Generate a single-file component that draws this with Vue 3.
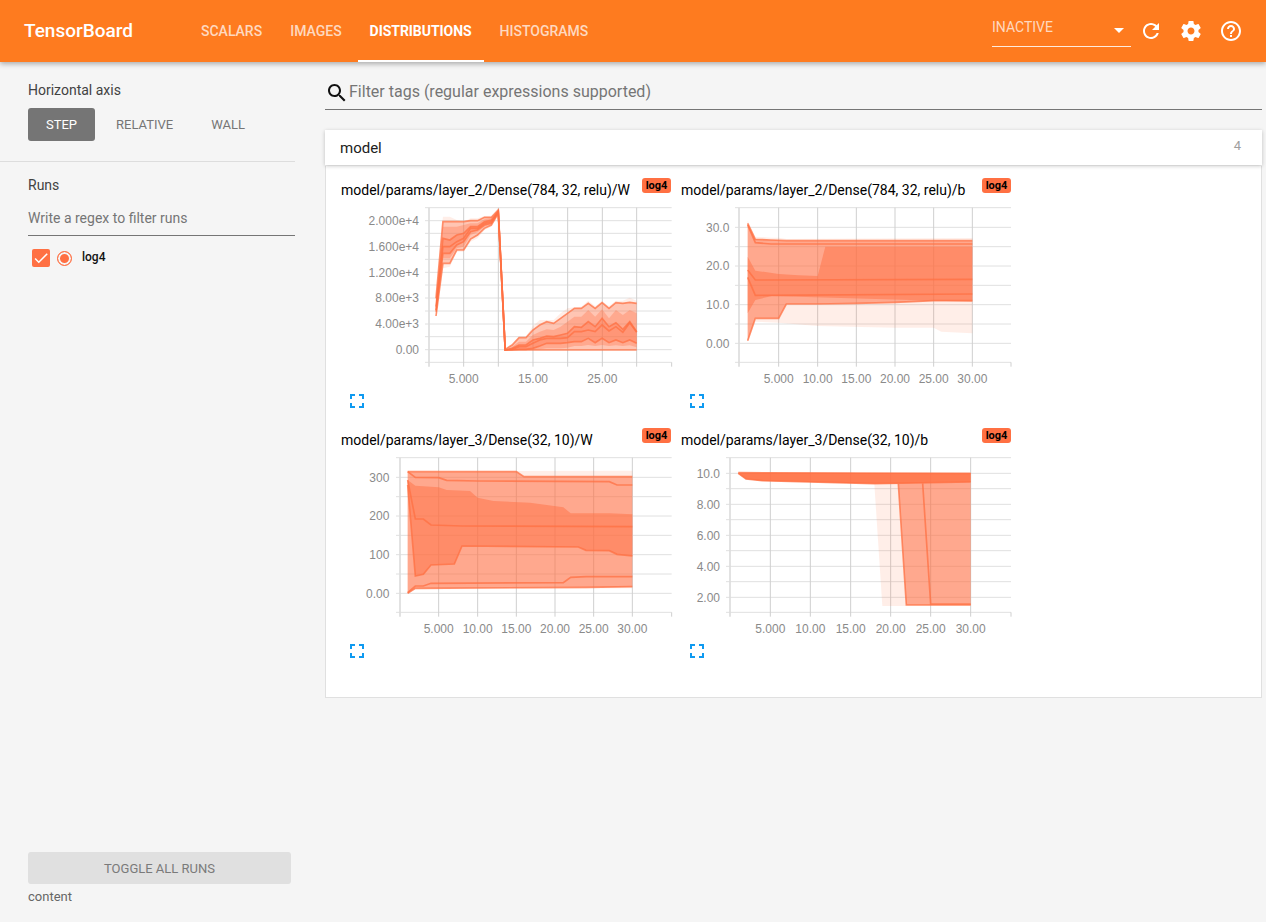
<script setup>
const tabs = ['Scalars', 'Images', 'Distributions', 'Histograms']

// 把一组 y 值按步长展开成点串（第一张图是逐步读出来的）
function steps(x0, dx, ys) {
  return ys.map((y, i) => `${x0 + dx * i},${y}`).join(' ')
}

// 上下两条折线合成一个闭合色带
function band(top, bottom) {
  return `${top} ${bottom.split(' ').reverse().join(' ')}`
}

const q = [
  [375, 140, 140, 150, 155, 145, 145, 138, 137, 115, 538, 525, 500, 500, 468, 450, 450, 450, 430, 415, 412, 410, 392, 408, 394, 408, 392, 392, 383, 392],
  [385, 155, 155, 155, 155, 152, 152, 142, 142, 120, 538, 525, 503, 503, 480, 465, 455, 460, 445, 430, 415, 415, 400, 415, 398, 415, 398, 400, 397, 400],
  [395, 170, 170, 170, 165, 160, 160, 148, 145, 122, 540, 530, 515, 515, 495, 485, 478, 480, 470, 455, 440, 440, 420, 440, 418, 445, 420, 435, 420, 430],
  [410, 205, 210, 195, 190, 170, 170, 155, 150, 124, 540, 535, 525, 525, 510, 505, 498, 500, 495, 490, 470, 472, 455, 470, 445, 470, 458, 478, 455, 485],
  [420, 230, 230, 215, 205, 175, 175, 160, 155, 125, 540, 538, 530, 530, 520, 510, 505, 505, 505, 503, 485, 485, 480, 485, 465, 483, 470, 487, 458, 487],
  [425, 250, 250, 225, 215, 185, 180, 165, 160, 127, 540, 540, 538, 538, 535, 528, 520, 520, 520, 518, 515, 515, 505, 518, 505, 518, 510, 518, 510, 520],
  [430, 265, 265, 235, 230, 195, 187, 170, 163, 128, 540, 540, 540, 540, 540, 538, 535, 535, 535, 533, 528, 528, 525, 528, 525, 528, 526, 528, 526, 532],
  [438, 280, 280, 240, 240, 207, 195, 175, 165, 130, 540, 540, 540, 540, 540, 540, 540, 540, 540, 540, 540, 540, 540, 540, 540, 540, 540, 540, 540, 540],
  [440, 295, 290, 245, 245, 215, 205, 180, 170, 132, 540, 540, 540, 540, 540, 540, 540, 540, 540, 540, 540, 540, 540, 540, 540, 540, 540, 540, 540, 540],
].map((ys) => steps(318, 20.76, ys))

const w1 = {
  q0: '233,155 559,153 907,152',
  q1: '233,155 559,155 582,170 907,170',
  q2: '233,155 256,172 326,173 350,181 443,183 838,185 861,195 907,195',
  q3: '233,180 256,197 326,202 350,210 420,213 443,233 490,243 600,248 700,262 722,280 838,280 907,283',
  q4: '233,180 256,297 280,297 303,315 396,318 907,320',
  q5: '233,195 256,468 280,463 303,435 373,432 396,378 745,381 768,391 838,392 861,403 907,408',
  q6: '233,518 256,498 280,498 303,490 700,488 722,472 768,470 907,470',
  q7: '233,520 256,505 768,502 907,500',
  q8: '233,520 256,508 907,505',
}

const b1 = {
  q0: '218,152 241,200 288,203 311,203 334,207 892,204',
  q1: '218,160 241,208 288,210 334,212 892,212',
  q2: '218,165 241,218 288,222 892,222',
  q3: '218,260 241,302 311,312 370,316 428,318 451,230 892,230',
  q4: '218,300 241,330 892,328',
  q5: '218,322 241,376 892,372',
  q6: '218,430 241,390 290,378 892,395',
  q7: '218,512 241,445 311,445 334,402 428,402 544,400 660,397 776,392 892,392',
  q8: '218,515 241,455 311,458 428,468 660,473 776,473 799,485 892,490',
}

const b2 = {
  top: '190,158 887,160',
  outer: '190,162 213,178 262,183 598,192 622,558 887,558',
  mid: '190,162 213,178 262,183 670,192 694,555 887,555',
  core: '190,160 213,177 262,182 598,191 887,186',
}

const charts = [
  {
    title: 'model/params/layer_2/Dense(784, 32, relu)/W',
    vbX: 33,
    left: 297,
    right: 1025,
    labelX: 267,
    xTicks: [
      { x: 401, label: '5.000' },
      { x: 505, label: '' },
      { x: 609, label: '15.00' },
      { x: 713, label: '' },
      { x: 817, label: '25.00' },
      { x: 920, label: '' },
    ],
    yTicks: [
      { y: 152, label: '2.000e+4' },
      { y: 229, label: '1.600e+4' },
      { y: 307, label: '1.200e+4' },
      { y: 384, label: '8.00e+3' },
      { y: 462, label: '4.00e+3' },
      { y: 539, label: '0.00' },
    ],
    minor: [113, 190, 268, 345, 423, 500, 577],
    bands: [
      { level: 'outer', points: band(q[0], q[8]) },
      { level: 'soft', points: band(q[1], q[7]) },
      { level: 'soft', points: band(q[2], q[6]) },
      { level: 'soft', points: band(q[3], q[5]) },
    ],
    lines: [q[1], q[3], q[4], q[5], q[7]],
  },
  {
    title: 'model/params/layer_2/Dense(784, 32, relu)/b',
    vbX: 18,
    left: 192,
    right: 1008,
    labelX: 163,
    xTicks: [
      { x: 311, label: '5.000' },
      { x: 428, label: '10.00' },
      { x: 544, label: '15.00' },
      { x: 660, label: '20.00' },
      { x: 776, label: '25.00' },
      { x: 892, label: '30.00' },
    ],
    yTicks: [
      { y: 172, label: '30.0' },
      { y: 288, label: '20.0' },
      { y: 404, label: '10.0' },
      { y: 520, label: '0.00' },
    ],
    minor: [113, 230, 346, 462, 577],
    bands: [
      { level: 'outer', points: band(b1.q0, b1.q8) },
      { level: 'mid', points: band(b1.q1, b1.q7) },
      { level: 'inner', points: band(b1.q3, b1.q6) },
    ],
    lines: [b1.q1, b1.q2, b1.q4, b1.q5, b1.q7],
  },
  {
    title: 'model/params/layer_3/Dense(32, 10)/W',
    vbX: 33,
    left: 210,
    right: 1025,
    labelX: 178,
    xTicks: [
      { x: 326, label: '5.000' },
      { x: 443, label: '10.00' },
      { x: 559, label: '15.00' },
      { x: 675, label: '20.00' },
      { x: 791, label: '25.00' },
      { x: 907, label: '30.00' },
    ],
    yTicks: [
      { y: 172, label: '300' },
      { y: 288, label: '200' },
      { y: 404, label: '100' },
      { y: 520, label: '0.00' },
    ],
    minor: [113, 230, 346, 462, 577],
    bands: [
      { level: 'outer', points: band(w1.q0, w1.q8) },
      { level: 'mid', points: band(w1.q1, w1.q7) },
      { level: 'inner', points: band(w1.q3, w1.q5) },
    ],
    lines: [w1.q1, w1.q2, w1.q4, w1.q5, w1.q6, w1.q7],
  },
  {
    title: 'model/params/layer_3/Dense(32, 10)/b',
    vbX: 18,
    left: 165,
    right: 1008,
    labelX: 135,
    xTicks: [
      { x: 286, label: '5.000' },
      { x: 406, label: '10.00' },
      { x: 527, label: '15.00' },
      { x: 647, label: '20.00' },
      { x: 767, label: '25.00' },
      { x: 887, label: '30.00' },
    ],
    yTicks: [
      { y: 160, label: '10.0' },
      { y: 253, label: '8.00' },
      { y: 346, label: '6.00' },
      { y: 439, label: '4.00' },
      { y: 532, label: '2.00' },
    ],
    minor: [113, 206, 299, 392, 485, 577],
    bands: [
      { level: 'outer', points: band(b2.top, b2.outer) },
      { level: 'mid', points: band(b2.top, b2.mid) },
      { level: 'core', points: band(b2.top, b2.core) },
    ],
    lines: [b2.top, b2.core, '670,192 694,555 887,555', '743,190 767,552 887,552'],
  },
]
</script>

<template>
  <div class="page">
    <header class="toolbar">
      <div class="brand">TensorBoard</div>
      <nav class="tabs">
        <a v-for="tab in tabs" :key="tab" :class="['tab', { active: tab === 'Distributions' }]">{{ tab }}</a>
      </nav>
      <div class="selector">
        <span>INACTIVE</span>
        <i class="caret"></i>
      </div>
      <svg class="tool refresh" viewBox="0 0 24 24"><path d="M17.65 6.35C16.2 4.9 14.21 4 12 4c-4.42 0-7.99 3.58-7.99 8s3.57 8 7.99 8c3.73 0 6.84-2.55 7.73-6h-2.08c-.82 2.33-3.04 4-5.65 4-3.31 0-6-2.69-6-6s2.69-6 6-6c1.66 0 3.14.69 4.22 1.78L13 11h7V4l-2.35 2.35z" /></svg>
      <svg class="tool" viewBox="0 0 24 24"><path d="M19.43 12.98c.04-.32.07-.64.07-.98s-.03-.66-.07-.98l2.11-1.65c.19-.15.24-.42.12-.64l-2-3.46c-.12-.22-.39-.3-.61-.22l-2.49 1c-.52-.4-1.08-.73-1.69-.98l-.38-2.65C14.46 2.18 14.25 2 14 2h-4c-.25 0-.46.18-.49.42l-.38 2.65c-.61.25-1.17.59-1.69.98l-2.49-1c-.23-.09-.49 0-.61.22l-2 3.46c-.13.22-.07.49.12.64l2.11 1.65c-.04.32-.07.65-.07.98s.03.66.07.98l-2.11 1.65c-.19.15-.24.42-.12.64l2 3.46c.12.22.39.3.61.22l2.49-1c.52.4 1.08.73 1.69.98l.38 2.65c.03.24.24.42.49.42h4c.25 0 .46-.18.49-.42l.38-2.65c.61-.25 1.17-.59 1.69-.98l2.49 1c.23.09.49 0 .61-.22l2-3.46c.12-.22.07-.49-.12-.64l-2.11-1.65zM12 15.5c-1.93 0-3.5-1.57-3.5-3.5s1.57-3.5 3.5-3.5 3.5 1.57 3.5 3.5-1.57 3.5-3.5 3.5z" /></svg>
      <svg class="tool" viewBox="0 0 24 24"><path d="M11 18h2v-2h-2v2zm1-16C6.48 2 2 6.48 2 12s4.48 10 10 10 10-4.48 10-10S17.52 2 12 2zm0 18c-4.41 0-8-3.59-8-8s3.59-8 8-8 8 3.59 8 8-3.59 8-8 8zm0-14c-2.21 0-4 1.79-4 4h2c0-1.1.9-2 2-2s2 .9 2 2c0 2-3 1.75-3 5h2c0-2.25 3-2.5 3-5 0-2.21-1.79-4-4-4z" /></svg>
    </header>

    <div class="content">
      <aside class="sidebar">
        <section class="axis">
          <div class="label">Horizontal axis</div>
          <div class="axis-buttons">
            <button class="axis-btn selected">STEP</button>
            <button class="axis-btn">RELATIVE</button>
            <button class="axis-btn">WALL</button>
          </div>
        </section>
        <section class="runs">
          <div class="label">Runs</div>
          <div class="run-filter">Write a regex to filter runs</div>
          <div class="run">
            <span class="checkbox">
              <svg viewBox="0 0 24 24"><path d="M9 16.17L4.83 12l-1.41 1.41L9 19 21 7l-1.41-1.41z" /></svg>
            </span>
            <span class="radio"></span>
            <span class="run-name">log4</span>
          </div>
        </section>
        <footer class="side-footer">
          <button class="toggle">TOGGLE ALL RUNS</button>
          <div class="footer-note">content</div>
        </footer>
      </aside>

      <main class="main">
        <div class="filter">
          <svg class="search" viewBox="0 0 24 24"><path d="M15.5 14h-.79l-.28-.27C15.41 12.59 16 11.11 16 9.5 16 5.91 13.09 3 9.5 3S3 5.91 3 9.5 5.91 16 9.5 16c1.61 0 3.09-.59 4.23-1.57l.27.28v.79l5 4.99L20.49 19l-4.99-5zm-6 0C7.01 14 5 11.99 5 9.5S7.01 5 9.5 5 14 7.01 14 9.5 11.99 14 9.5 14z" /></svg>
          <span class="filter-text">Filter tags (regular expressions supported)</span>
        </div>

        <div class="category">
          <span>model</span>
          <span class="count">4</span>
        </div>

        <div class="panel">
          <div v-for="chart in charts" :key="chart.title" class="card">
            <div class="card-head">
              <span class="card-title">{{ chart.title }}</span>
              <span class="chip">log4</span>
            </div>
            <svg class="chart" width="335" height="186" :viewBox="`${chart.vbX} 96 1005 558`">
              <line v-for="y in chart.minor" :key="'m' + y" class="grid-h" :x1="chart.left - 12" :x2="chart.right" :y1="y" :y2="y" />
              <line v-for="t in chart.yTicks" :key="'y' + t.y" class="grid-h" :x1="chart.left - 12" :x2="chart.right" :y1="t.y" :y2="t.y" />
              <line v-for="t in chart.xTicks" :key="'x' + t.x" class="grid-v" :x1="t.x" :x2="t.x" y1="113" y2="590" />
              <line class="axis-line" :x1="chart.left" :x2="chart.left" y1="113" y2="590" />
              <line class="grid-v" :x1="chart.right" :x2="chart.right" y1="577" y2="590" />
              <polygon v-for="(b, i) in chart.bands" :key="i" :class="['fill', b.level]" :points="b.points" />
              <polyline v-for="(l, i) in chart.lines" :key="i" class="quantile" :points="l" />
              <text v-for="t in chart.yTicks" :key="'yl' + t.y" class="tick" text-anchor="end" :x="chart.labelX" :y="t.y + 13">{{ t.label }}</text>
              <text v-for="t in chart.xTicks" :key="'xl' + t.x" class="tick" text-anchor="middle" :x="t.x" y="638">{{ t.label }}</text>
            </svg>
            <svg class="expand" viewBox="5 5 14 14"><path d="M7 14H5v5h5v-2H7v-3zm-2-4h2V7h3V5H5v5zm12 7h-3v2h5v-5h-2v3zM14 5v2h3v3h2V5h-5z" /></svg>
          </div>
        </div>
      </main>
    </div>
  </div>
</template>

<style>
html,
body {
  margin: 0;
  background: #f5f5f5;
}
</style>

<style scoped>
.page {
  height: 922px;
  display: flex;
  flex-direction: column;
  overflow: hidden;
  font-family: Roboto, 'Liberation Sans', sans-serif;
  background: #f5f5f5;
}

.toolbar {
  flex: none;
  height: 62px;
  display: flex;
  align-items: center;
  padding-left: 24px;
  background: #fe7b1f;
  color: #fff;
  box-shadow: 0 2px 5px rgba(0, 0, 0, 0.3);
  position: relative;
  z-index: 1;
}

.brand {
  width: 165px;
  font-size: 19px;
  font-weight: 500;
  margin-top: -1px;
}

.tabs {
  display: flex;
  align-self: stretch;
  gap: 4px;
}

.tab {
  display: flex;
  align-items: center;
  padding: 0 12px;
  font-size: 14px;
  font-weight: 500;
  text-transform: uppercase;
  color: rgba(255, 255, 255, 0.72);
  box-sizing: border-box;
  border-bottom: 2px solid transparent;
  border-top: 2px solid transparent;
  margin-top: -1px;
}

.tab.active {
  color: #fff;
  font-weight: 700;
  letter-spacing: -0.05px;
  border-bottom-color: #fff;
}

.selector {
  width: 139px;
  height: 34px;
  margin-left: auto;
  margin-top: -3px;
  box-sizing: border-box;
  padding-bottom: 4px;
  display: flex;
  justify-content: space-between;
  align-items: center;
  border-bottom: 1px solid rgba(255, 255, 255, 0.85);
  font-size: 14px;
  color: rgba(255, 255, 255, 0.72);
}

.caret {
  width: 0;
  height: 0;
  margin: 7px 7px 0 0;
  border-left: 5px solid transparent;
  border-right: 5px solid transparent;
  border-top: 5px solid #fff;
}

.tool {
  width: 24px;
  height: 24px;
  fill: #fff;
  margin-left: 16px;
}

.tool.refresh {
  margin-left: 8px;
  margin-right: 0;
}

.tool:last-child {
  margin-right: 23px;
}

.content {
  flex: 1;
  display: flex;
  min-height: 0;
}

.sidebar {
  flex: none;
  width: 295px;
  display: flex;
  flex-direction: column;
  font-size: 14px;
  color: #424242;
}

.label {
  line-height: 20px;
  margin-left: 28px;
}

.axis {
  padding: 18px 0 20px;
  border-bottom: 1px solid #ddd;
}

.axis-buttons {
  display: flex;
  gap: 3px;
  margin: 8px 0 0 28px;
}

.axis-btn {
  height: 33px;
  padding: 0 18px;
  border: none;
  border-radius: 3px;
  background: none;
  font-family: inherit;
  font-size: 13px;
  color: #757575;
}

.axis-btn:last-child {
  margin-left: -1px;
}

.axis-btn.selected {
  background: #757575;
  color: #fff;
}

.runs {
  padding-top: 13px;
}

.run-filter {
  margin: 6px 0 0 28px;
  height: 35px;
  line-height: 35px;
  box-sizing: border-box;
  border-bottom: 1px solid #757575;
  color: #757575;
}

.run {
  display: flex;
  align-items: center;
  margin: 13px 0 0 32px;
}

.checkbox {
  width: 18px;
  height: 18px;
  border-radius: 2px;
  background: #ff7043;
  display: flex;
}

.checkbox svg {
  fill: #fff;
}

.radio {
  width: 15px;
  height: 15px;
  box-sizing: border-box;
  margin-left: 7px;
  border: 1.5px solid #ff7043;
  border-radius: 50%;
  background: #ff7043;
  box-shadow: inset 0 0 0 2px #f5f5f5;
}

.run-name {
  margin: -2px 0 0 10px;
  font-size: 12px;
  font-weight: 500;
  color: #111;
}

.side-footer {
  margin-top: auto;
  padding: 0 4px 17px 28px;
}

.toggle {
  width: 100%;
  height: 32px;
  border: none;
  border-radius: 3px;
  background: #e0e0e0;
  font-family: inherit;
  font-size: 13px;
  color: #7a7a7a;
}

.footer-note {
  margin-top: 5px;
  font-size: 13px;
  line-height: 16px;
  color: #666;
}

.main {
  flex: 1;
  min-width: 0;
  padding: 0 4px 0 30px;
}

.filter {
  display: flex;
  align-items: center;
  margin-top: 19px;
  padding-bottom: 4px;
  border-bottom: 1px solid #757575;
  font-size: 16px;
  color: #757575;
}

.filter-text {
  margin-top: -4px;
}

.search {
  width: 24px;
  height: 24px;
  fill: #111;
}

.category {
  height: 35px;
  margin-top: 20px;
  padding: 0 21px 0 15px;
  display: flex;
  align-items: center;
  justify-content: space-between;
  background: #fff;
  box-shadow: 0 1px 4px rgba(0, 0, 0, 0.22);
  font-size: 15px;
  color: #212121;
  position: relative;
}

.count {
  font-size: 13px;
  color: #9e9e9e;
  margin-top: -4px;
}

.panel {
  margin-top: 1px;
  padding: 12px 0 19px 15px;
  display: flex;
  flex-wrap: wrap;
  background: #fff;
  border: 1px solid #e0e0e0;
  border-top: none;
}

.card {
  width: 340px;
  height: 250px;
}

.card-head {
  height: 24px;
  display: flex;
  justify-content: space-between;
  align-items: flex-start;
  padding-right: 10px;
}

.card-title {
  margin-top: 2px;
  line-height: 20px;
  font-size: 14px;
  color: #000;
}

.chip {
  width: 29px;
  height: 15px;
  border-radius: 3px;
  background: #ff7043;
  text-align: center;
  font-size: 11px;
  line-height: 15px;
  font-weight: 700;
  color: #000;
}

.chart {
  display: block;
}

.grid-h {
  stroke: #e0e0e0;
  stroke-width: 3;
}

.grid-v {
  stroke: #cfcfcf;
  stroke-width: 3;
}

.axis-line {
  stroke: #ddd;
  stroke-width: 5;
}

.fill {
  fill: #ff7043;
}

.fill.outer {
  fill-opacity: 0.12;
}

.fill.soft {
  fill-opacity: 0.32;
}

.fill.mid {
  fill-opacity: 0.55;
}

.fill.inner {
  fill-opacity: 0.5;
}

.fill.core {
  fill-opacity: 0.8;
}

.quantile {
  fill: none;
  stroke: #ff7043;
  stroke-width: 5;
  stroke-opacity: 0.75;
}

.tick {
  font-family: 'Liberation Sans', Arial, sans-serif;
  font-size: 36px;
  fill: #8a8a8a;
}

.expand {
  display: block;
  width: 14px;
  height: 14px;
  margin: 6px 0 0 9px;
  fill: #0f9af0;
}
</style>
